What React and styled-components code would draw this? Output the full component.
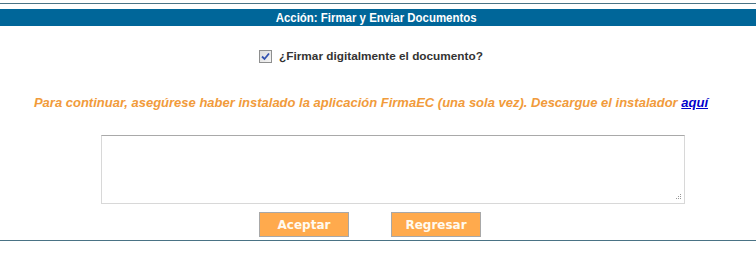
import React from "react";
import styled, { createGlobalStyle } from "styled-components";

const Global = createGlobalStyle`
  html, body { margin: 0; padding: 0; background: #fff; }
  body { font-family: "Liberation Sans", Arial, sans-serif; }
`;

const Page = styled.div`
  width: 756px;
  padding-top: 3px;
`;

const Frame = styled.div`
  border-top: 1px solid #4a7385;
  border-bottom: 1px solid #4a7385;
  padding-top: 5px;
  padding-bottom: 3px;
`;

const HeaderBar = styled.div`
  height: 17px;
  background: #006699;
  color: #fff;
  font-weight: bold;
  font-size: 13px;
  line-height: 17px;
  text-align: center;
  padding-right: 4px;
`;

const Narrow = styled.span`
  display: inline-block;
  transform: scaleX(0.88);
`;

const CheckRow = styled.label`
  display: flex;
  justify-content: center;
  align-items: center;
  gap: 7px;
  margin-top: 23px;
  padding-right: 14px;
  font-size: 11.8px;
  line-height: 14px;
  font-weight: bold;
  color: #333;
`;

const Box = styled.span`
  box-sizing: border-box;
  width: 13px;
  height: 13px;
  border: 1px solid #8e8f8f;
  background: linear-gradient(135deg, #dcdcdc 0%, #f4f4f4 100%);
  display: flex;
  align-items: center;
  justify-content: center;
`;

const Notice = styled.p`
  margin: 32px 0 0;
  padding-right: 14px;
  text-align: center;
  font-size: 13px;
  line-height: 15px;
  font-weight: bold;
  font-style: italic;
  color: #f19b3b;
`;

const Link = styled.a`
  color: #0000cc;
  text-decoration: underline;
`;

const AreaRow = styled.div`
  display: flex;
  padding-left: 101px;
  margin-top: 25px;
`;

const AreaWrap = styled.div`
  position: relative;
  width: 584px;
  height: 69px;
`;

const Area = styled.textarea`
  box-sizing: border-box;
  display: block;
  width: 100%;
  height: 100%;
  margin: 0;
  border: 1px solid #d8d8d8;
  border-top-color: #a9a9a9;
  resize: none;
  outline: none;
  font-family: inherit;
`;

const Grip = styled.svg`
  position: absolute;
  right: 3px;
  bottom: 3px;
  pointer-events: none;
`;

const Buttons = styled.div`
  display: flex;
  justify-content: center;
  gap: 42px;
  margin-top: 8px;
  padding-right: 16px;
`;

const Button = styled.button`
  box-sizing: border-box;
  width: 90px;
  height: 25px;
  background: #ffaa4d;
  border: 1px solid #a8a8a8;
  color: #fffaf0;
  font-family: "DejaVu Sans", Verdana, sans-serif;
  font-weight: bold;
  font-size: 12px;
  padding: 0;
`;

export default function App() {
  return (
    <Page>
      <Global />
      <Frame>
        <HeaderBar>
          <Narrow>Acción: Firmar y Enviar Documentos</Narrow>
        </HeaderBar>
        <CheckRow>
          <Box>
            <svg width="9" height="9" viewBox="0 0 9 9">
              <path d="M1 4.5 L3.5 7 L8 1.5" fill="none" stroke="#3352b0" strokeWidth="1.8" />
            </svg>
          </Box>
          ¿Firmar digitalmente el documento?
        </CheckRow>
        <Notice>
          Para continuar, asegúrese haber instalado la aplicación FirmaEC (una sola vez). Descargue el instalador <Link href="#">aquí</Link>
        </Notice>
        <AreaRow>
          <AreaWrap>
            <Area />
            <Grip width="7" height="7" viewBox="0 0 7 7">
              <rect x="5" y="0" width="1" height="1" fill="#999" />
              <rect x="3" y="2" width="1" height="1" fill="#999" />
              <rect x="5" y="2" width="1" height="1" fill="#999" />
              <rect x="1" y="4" width="1" height="1" fill="#999" />
              <rect x="3" y="4" width="1" height="1" fill="#999" />
              <rect x="5" y="4" width="1" height="1" fill="#999" />
            </Grip>
          </AreaWrap>
        </AreaRow>
        <Buttons>
          <Button>Aceptar</Button>
          <Button>Regresar</Button>
        </Buttons>
      </Frame>
    </Page>
  );
}
